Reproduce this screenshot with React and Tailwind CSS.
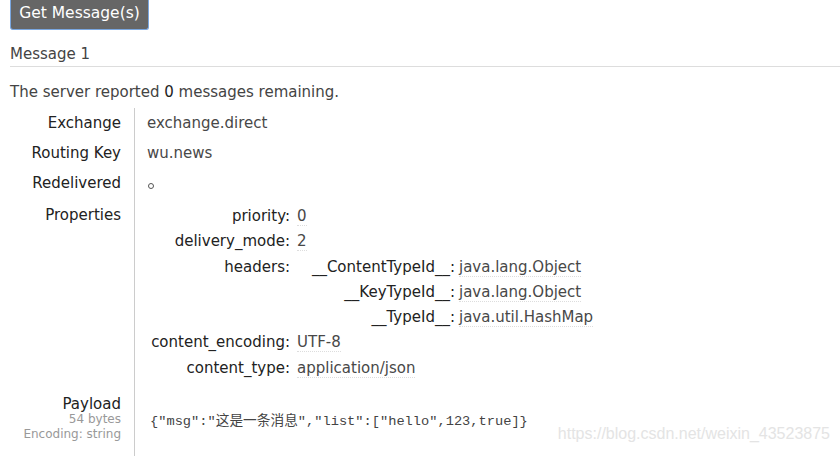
import React from "react";

const font = { fontFamily: '"DejaVu Sans", Verdana, sans-serif' };

function Row({ label, children }) {
  return (
    <div className="flex">
      <div className="w-[124px] shrink-0 pr-[13px] text-right text-[#222] h-[30px] leading-[30px]">{label}</div>
      <div className="border-l border-[#ccc] pl-[12px] text-[#484848] h-[30px] leading-[30px] grow">{children}</div>
    </div>
  );
}

function Val({ children }) {
  return <span className="border-b border-dotted border-[#ddd]">{children}</span>;
}

function PRow({ k, children }) {
  return (
    <div className="flex min-h-[25.3px] leading-[25.3px]">
      <div className="w-[160px] shrink-0 text-right text-[#222] pr-[7px]">{k}</div>
      <div className="text-[#484848]">{children}</div>
    </div>
  );
}

function HRow({ k, children }) {
  return (
    <div className="flex h-[25.3px] leading-[25.3px]">
      <div className="w-[162px] shrink-0 text-right text-[#222] pr-[4px]">{k}</div>
      <div className="text-[#484848]"><Val>{children}</Val></div>
    </div>
  );
}

export default function App() {
  return (
    <div className="relative w-[840px] h-[456px] overflow-hidden bg-white text-[15px]" style={font}>
      <div className="pl-[10px]">
        <button className="h-[30px] w-[139px] bg-[#666] text-white text-[15.5px] border-x border-b border-[#7aa7e0] rounded-b-[3px] pb-[2px]">
          Get Message(s)
        </button>
      </div>
      <div className="ml-[10px] mt-[11px] h-[26px] leading-[26px] border-b border-[#ddd] text-[#444]">Message 1</div>
      <div className="ml-[10px] mt-[11px] h-[28px] leading-[28px] text-[#444]">
        The server reported <span className="text-[#222]">0</span> messages remaining.
      </div>
      <div className="ml-[10px] mt-[2px]">
        <Row label="Exchange">exchange.direct</Row>
        <Row label="Routing Key">wu.news</Row>
        <Row label="Redelivered">
          <span className="inline-block w-[6px] h-[6px] rounded-full border border-[#555] align-middle mt-[4px] ml-[1px]" />
        </Row>
        <div className="flex">
          <div className="w-[124px] shrink-0 pr-[13px] text-right text-[#222] leading-[30px] pt-[2px]">Properties</div>
          <div className="border-l border-[#ccc] pl-[2px] pt-[6px] pb-[9px] grow">
            <PRow k="priority:"><Val>0</Val></PRow>
            <PRow k="delivery_mode:"><Val>2</Val></PRow>
            <PRow k="headers:">
              <div className="flex flex-col">
                <HRow k="__ContentTypeId__:">java.lang.Object</HRow>
                <HRow k="__KeyTypeId__:">java.lang.Object</HRow>
                <HRow k="__TypeId__:">java.util.HashMap</HRow>
              </div>
            </PRow>
            <PRow k="content_encoding:"><Val>UTF-8</Val></PRow>
            <PRow k="content_type:"><Val>application/json</Val></PRow>
          </div>
        </div>
        <div className="flex">
          <div className="w-[124px] shrink-0 pr-[13px] text-right pt-[7px]">
            <div className="text-[#222] leading-[15px]">Payload</div>
            <div className="text-[#999] text-[12px] leading-[15px]">54 bytes</div>
            <div className="text-[#999] text-[12px] leading-[15px]">Encoding: string</div>
          </div>
          <div className="border-l border-[#ccc] pl-[15px] pt-[20px] h-[80px] grow text-[#444] text-[13.7px]">
            <span style={{ fontFamily: '"Liberation Mono", "Noto Sans CJK SC", monospace' }}>{'{"msg":"这是一条消息","list":["hello",123,true]}'}</span>
          </div>
        </div>
      </div>
      <div className="absolute right-[10px] bottom-[10px] text-[16px] text-[#e4e4e4]" style={{ fontFamily: '"Liberation Sans", Arial, sans-serif' }}>
        https://blog.csdn.net/weixin_43523875
      </div>
    </div>
  );
}
